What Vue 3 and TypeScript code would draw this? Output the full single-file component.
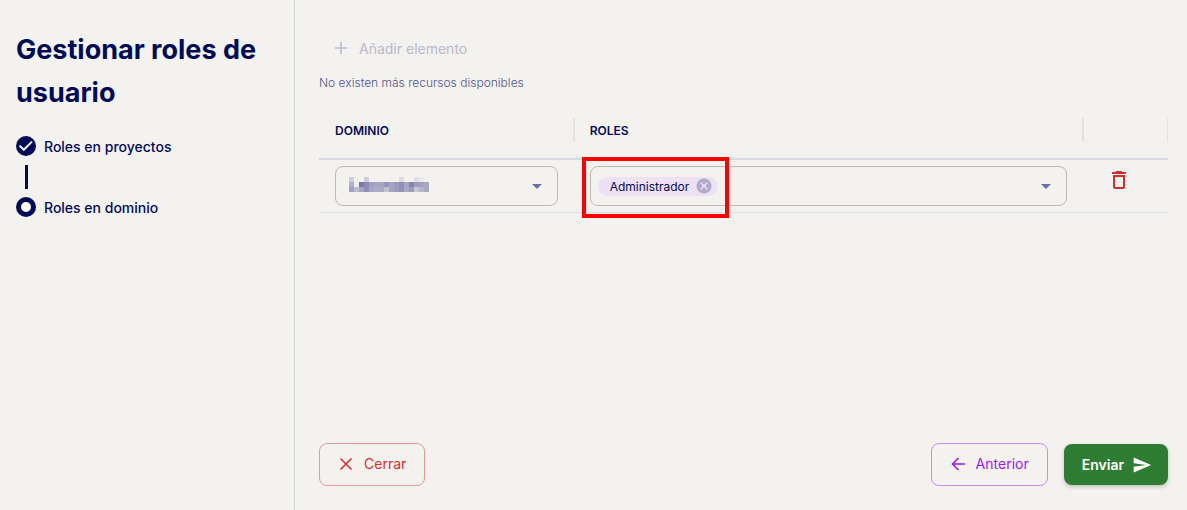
<script setup lang="ts">
import { ref } from 'vue'

interface Step {
  label: string
  done: boolean
}

const steps: Step[] = [
  { label: 'Roles en proyectos', done: true },
  { label: 'Roles en dominio', done: false },
]

const roles = ref<string[]>(['Administrador'])

const removeRole = (role: string) => {
  roles.value = roles.value.filter((r) => r !== role)
}

// Tint of each block of the obscured domain name, row by row.
const mosaic: string[][] = [
  ['#cdccd8', '', '', '#cfceda', '', '', '', '', '', '', '#dbdae0', '', '', '#dedde3', '#ebeaeb', ''],
  ['#b0b0ca', '#efeeee', '#7a7aa8', '#8e8eb4', '#a0a0c0', '#a7a7c5', '#a6a6c4', '#9595b8', '#a6a6c4', '#9a9abc', '#9090b5', '#a5a5c3', '#8585ae', '#9c9cbd', '#a0a0c0', '#a9a9c5'],
  ['#a1a1c1', '#bdbdd0', '#a5a5c3', '#8d8db3', '#a7a7c5', '#adadc8', '#aaaac6', '#c1c1d3', '#a3a3c2', '#9c9cbe', '#9292b6', '#a9a9c6', '#9c9cbd', '#c6c6d6', '#b4b4cc', '#a8a8c5'],
]
</script>

<template>
  <div class="layout">
    <aside class="sidebar">
      <h1>Gestionar roles de usuario</h1>
      <ol class="steps">
        <li v-for="step in steps" :key="step.label" class="step">
          <svg v-if="step.done" class="step-icon" viewBox="0 0 20 20" aria-hidden="true">
            <circle cx="10" cy="10" r="10" fill="#000b57" />
            <path d="M3.600 9.600 7.800 13.800 16 5.600" fill="none" stroke="#f4f2ef" stroke-width="2" />
          </svg>
          <svg v-else class="step-icon" viewBox="0 0 20 20" aria-hidden="true">
            <circle cx="10" cy="10" r="10" fill="#000b57" />
            <circle cx="10" cy="10" r="5" fill="#fff" />
          </svg>
          <span>{{ step.label }}</span>
        </li>
      </ol>
    </aside>

    <main class="content">
      <button type="button" class="add" disabled>
        <svg class="icon" viewBox="0 0 20 20" aria-hidden="true">
          <path d="M10 4v12M4 10h12" fill="none" stroke="currentColor" stroke-width="1.6" />
        </svg>
        Añadir elemento
      </button>
      <p class="hint">No existen más recursos disponibles</p>

      <table class="grid">
        <colgroup>
          <col class="col-domain" />
          <col class="col-roles" />
          <col class="col-actions" />
        </colgroup>
        <thead>
          <tr>
            <th scope="col"><div class="head" id="head-domain">DOMINIO</div></th>
            <th scope="col"><div class="head" id="head-roles">ROLES</div></th>
            <th scope="col" aria-label="Acciones"><div class="head last"></div></th>
          </tr>
        </thead>
        <tbody>
          <tr>
            <td>
              <div class="field">
                <select class="select" aria-labelledby="head-domain">
                  <option></option>
                </select>
                <svg class="mosaic" viewBox="0 0 80 15" aria-hidden="true" shape-rendering="crispEdges">
                  <template v-for="(row, y) in mosaic" :key="y">
                    <rect
                      v-for="(tint, x) in row"
                      :key="x"
                      :x="x * 5"
                      :y="y * 5"
                      width="5"
                      height="5"
                      :fill="tint || 'none'"
                    />
                  </template>
                </svg>
                <svg class="arrow" viewBox="0 0 24 24" aria-hidden="true">
                  <path d="M7 10l5 5 5-5z" fill="currentColor" />
                </svg>
              </div>
            </td>
            <td class="roles-cell">
              <div class="field">
                <span v-for="role in roles" :key="role" class="chip">
                  {{ role }}
                  <button type="button" class="chip-remove" :aria-label="`Quitar ${role}`" @click="removeRole(role)">
                    <svg viewBox="0 0 24 24" aria-hidden="true">
                      <path
                        fill="currentColor"
                        d="M12 2C6.47 2 2 6.47 2 12s4.47 10 10 10 10-4.47 10-10S17.53 2 12 2zm5 13.59L15.59 17 12 13.41 8.41 17 7 15.59 10.59 12 7 8.41 8.41 7 12 10.59 15.59 7 17 8.41 13.41 12 17 15.59z"
                      />
                    </svg>
                  </button>
                </span>
                <input class="role-input" type="text" role="combobox" aria-expanded="false" aria-labelledby="head-roles" />
                <svg class="arrow" viewBox="0 0 24 24" aria-hidden="true">
                  <path d="M7 10l5 5 5-5z" fill="currentColor" />
                </svg>
              </div>
              <div class="highlight"></div>
            </td>
            <td class="actions-cell">
              <button type="button" class="delete" aria-label="Eliminar">
                <svg viewBox="0 0 24 24" aria-hidden="true">
                  <path
                    fill="currentColor"
                    d="M6 19c0 1.1.9 2 2 2h8c1.100 0 2-.9 2-2V7H6v12zM8 9h8v10H8V9zm7.500-5-1-1h-5l-1 1H5v2h14V4h-3.500z"
                  />
                </svg>
              </button>
            </td>
          </tr>
        </tbody>
      </table>

      <footer class="footer">
        <button type="button" class="btn close">
          <svg class="icon" viewBox="0 0 20 20" aria-hidden="true">
            <path d="M4.500 4.500l11 11M15.500 4.500l-11 11" fill="none" stroke="currentColor" stroke-width="1.600" />
          </svg>
          Cerrar
        </button>
        <div class="footer-right">
          <button type="button" class="btn back">
            <svg class="icon" viewBox="0 0 20 20" aria-hidden="true">
              <path d="M17 10H4.500M10.500 4l-6 6 6 6" fill="none" stroke="currentColor" stroke-width="1.600" />
            </svg>
            Anterior
          </button>
          <button type="submit" class="btn send">
            Enviar
            <svg class="icon" viewBox="0 0 24 24" aria-hidden="true">
              <path fill="currentColor" d="M2.010 21 23 12 2.010 3 2 10l15 2-15 2z" />
            </svg>
          </button>
        </div>
      </footer>
    </main>
  </div>
</template>

<style>
body {
  margin: 0;
  background: #f4f2ef;
}
</style>

<style scoped>
.layout {
  display: flex;
  box-sizing: border-box;
  min-height: 100vh;
  color: #000b57;
  background: #f4f2ef;
  font-family: Inter, "Liberation Sans", sans-serif;
  font-size: 14px;
}

button,
input,
select {
  font-family: inherit;
  font-size: inherit;
}

.sidebar {
  box-sizing: border-box;
  flex: 0 0 295px;
  padding: 28px 16px;
  border-right: 1px solid #d3d3dd;
}

h1 {
  margin: 0 0 22px;
  font-size: 27px;
  font-weight: 700;
  line-height: 43px;
}

.steps {
  display: flex;
  flex-direction: column;
  gap: 41px;
  margin: 0;
  padding: 0;
  list-style: none;
}

.step {
  position: relative;
  display: flex;
  align-items: center;
  gap: 8px;
  height: 20px;
  font-weight: 500;
}

.step + .step::before {
  content: "";
  position: absolute;
  bottom: 28px;
  left: 9px;
  width: 3px;
  height: 24px;
  background: #000b57;
}

.step-icon {
  width: 20px;
  height: 20px;
}

.content {
  display: flex;
  flex: 1;
  flex-direction: column;
  min-width: 0;
  padding: 28px 19px 24px 24px;
}

.add {
  display: flex;
  align-items: center;
  align-self: flex-start;
  gap: 8px;
  height: 40px;
  padding: 0 12px;
  border: 0;
  color: #b9b9cc;
  background: none;
}

.icon {
  width: 20px;
  height: 20px;
}

.hint {
  margin: 6px 0 8px;
  color: #4f548c;
  font-size: 12px;
  font-weight: 300;
  line-height: 18px;
}

.grid {
  width: 100%;
  border-collapse: separate;
  border-spacing: 0;
  table-layout: fixed;
}

.col-domain {
  width: 30%;
}

.col-roles {
  width: 60%;
}

.col-actions {
  width: 10%;
}

th {
  height: 56px;
  padding: 2px 0 0;
  border-bottom: 2px solid #d9d9e4;
  font-size: 12px;
  font-weight: 600;
  text-align: left;
}

.head {
  box-sizing: border-box;
  height: 24px;
  margin-right: -1px;
  padding: 0 16px;
  border-right: 2px solid #e2e2e8;
  line-height: 26px;
}

.head.last {
  margin-right: 0;
  border-right-width: 1px;
}

td {
  padding: 6px 16px;
  border-bottom: 1px solid #dcdde9;
}

.field {
  position: relative;
  display: flex;
  align-items: center;
  box-sizing: border-box;
  height: 40px;
  padding: 0 8px 0 7px;
  border: 1px solid #b9b9b9;
  border-radius: 8px;
}

.select {
  flex: 1;
  min-width: 0;
  height: 100%;
  border: 0;
  appearance: none;
  background: none;
}

.mosaic {
  position: absolute;
  top: 10px;
  left: 13px;
  width: 80px;
  height: 15px;
  pointer-events: none;
}

.arrow {
  flex: none;
  width: 24px;
  height: 24px;
  color: #6b70a0;
  pointer-events: none;
}

.roles-cell {
  position: relative;
}

.chip {
  display: flex;
  align-items: center;
  gap: 6px;
  height: 19px;
  padding: 0 5px 0 12px;
  border-radius: 10px;
  background: #eee1f3;
  font-size: 12px;
}

.chip-remove {
  width: 18px;
  height: 18px;
  padding: 0;
  border: 0;
  color: #b0abcb;
  background: none;
}

.chip-remove svg,
.delete svg {
  display: block;
  width: 100%;
  height: 100%;
}

.role-input {
  flex: 1;
  min-width: 0;
  border: 0;
  outline: 0;
  background: none;
}

.highlight {
  position: absolute;
  top: -3px;
  left: 8px;
  box-sizing: border-box;
  width: 147px;
  height: 61px;
  border: 4px solid #f00;
  pointer-events: none;
}

.actions-cell {
  padding: 8px 24px;
  vertical-align: top;
}

.delete {
  display: block;
  width: 24px;
  height: 24px;
  padding: 0;
  border: 0;
  color: #d32f2f;
  background: none;
}

.footer {
  display: flex;
  align-items: center;
  justify-content: space-between;
  margin-top: auto;
}

.footer-right {
  display: flex;
  align-items: center;
  gap: 16px;
}

.btn {
  display: flex;
  align-items: center;
  gap: 8px;
  height: 43px;
  padding: 0 18px 2px 16px;
  border: 1px solid;
  border-radius: 8px;
  background: none;
  font-weight: 400;
}

.close {
  border-color: #e69797;
  color: #d32f2f;
}

.back {
  border-color: #cc88f8;
  color: #a017f5;
}

.send {
  height: 41px;
  padding: 0 16px 0 18px;
  border: 0;
  color: #fff;
  background: #2e7d32;
  box-shadow: 0 2px 4px rgb(0 0 0 / 20%);
  font-weight: 600;
}
</style>
